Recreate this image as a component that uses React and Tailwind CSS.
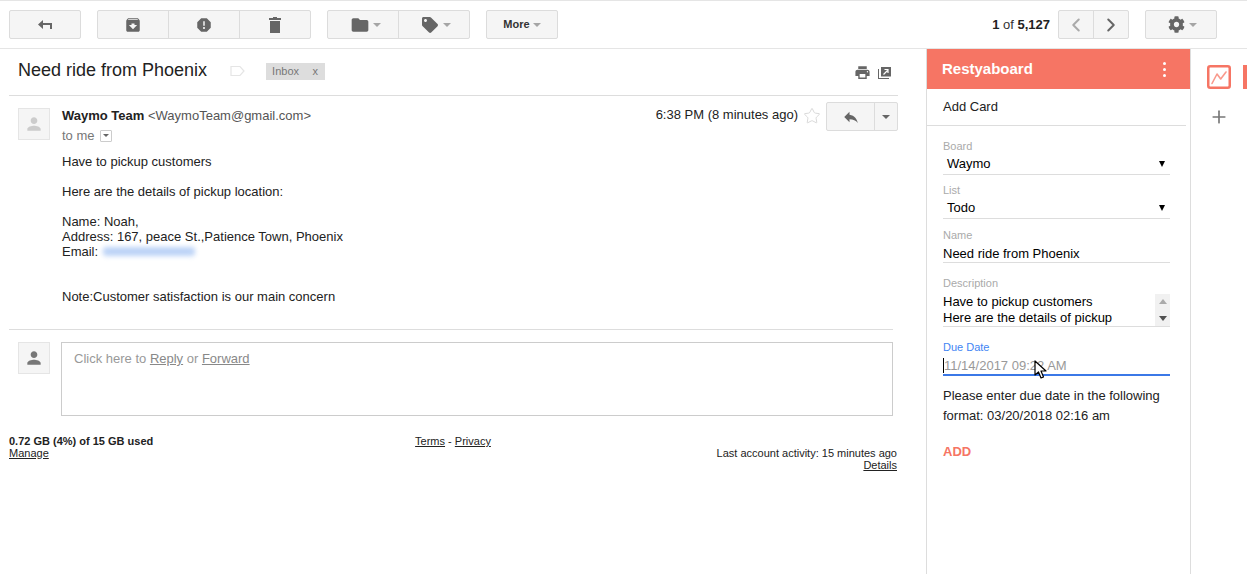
import React from 'react';
import { MdArchive, MdReport, MdFolder, MdReply, MdPrint, MdPerson } from 'react-icons/md';
import { FaCog, FaTag } from 'react-icons/fa';
import { ChevronLeft, ChevronRight, Plus, Star } from 'lucide-react';

const Caret = ({ className = 'border-t-[#a5a5a5]' }) => (
  <span className={`inline-block w-0 h-0 border-x-[4px] border-x-transparent border-t-[4px] ${className}`} />
);

const ToolBtn = ({ className = '', children }) => (
  <div className={`h-full flex items-center justify-center gap-[6px] border-r border-[#dcdcdc] last:border-r-0 text-[#666] ${className}`}>
    {children}
  </div>
);

const ToolGroup = ({ className = '', children }) => (
  <div className={`flex h-[29px] border border-[#dcdcdc] rounded-[2px] bg-[#f5f5f5] ${className}`}>{children}</div>
);

const Trash = () => (
  <svg width="12" height="16" viewBox="0 0 12 16" fill="#666">
    <path d="M4 0h4v1h4v2H0V1h4zM1 4h10v12H1z" />
  </svg>
);

const Popout = () => (
  <svg width="13" height="12" viewBox="0 0 13 12" fill="none">
    <path d="M0 2h1v9h10v1H0z" fill="#666" />
    <path d="M3 0h10v9.5H3z" fill="#666" />
    <path d="M5.5 7.5l4-4M6.5 2.5h3.5v3.5" stroke="#fff" strokeWidth="1.2" />
  </svg>
);

const Avatar = ({ iconClass }) => (
  <div className="w-[32px] h-[32px] shrink-0 bg-[#f5f5f5] border border-[#e5e5e5] flex items-center justify-center">
    <MdPerson size={20} className={iconClass} />
  </div>
);

const Label = ({ className = 'text-[#aaa]', children }) => (
  <div className={`text-[11px] leading-[13px] ${className}`}>{children}</div>
);

const SelectField = ({ label, value, className = '' }) => (
  <div className={className}>
    <Label>{label}</Label>
    <div className="mt-[1px] h-[19px] flex items-center justify-between pl-[4px] pr-[5px] border-b border-[#ddd] box-content pb-[1px] text-[13px] text-black">
      <span>{value}</span>
      <span className="inline-block w-0 h-0 border-x-[3.5px] border-x-transparent border-t-[6px] border-t-black" />
    </div>
  </div>
);

const Cursor = () => (
  <svg width="14" height="20" viewBox="0 0 14 20" className="absolute left-[91px] top-[2px]">
    <path d="M1 1v14l3.5-3 2.5 6 2.5-1-2.5-6H12z" fill="#fff" stroke="#000" strokeWidth="1.2" strokeLinejoin="round" />
  </svg>
);

const App = () => {
  return (
    <div className="w-[1247px] h-[574px] overflow-hidden bg-white flex flex-col font-['Liberation_Sans',Arial,sans-serif] text-[13px] text-[#222]">
      {/* top toolbar */}
      <div className="h-[49px] shrink-0 border-y border-[#e5e5e5] flex items-center pl-[9px] pr-[30px]">
        <ToolGroup className="w-[72px]">
          <ToolBtn className="flex-1">
            <svg width="14" height="9" viewBox="0 0 14 9" fill="#666"><path d="M5 0v3h9v6h-2V5H5v4L0 4.5z" /></svg>
          </ToolBtn>
        </ToolGroup>
        <ToolGroup className="w-[214px] ml-[16px]">
          <ToolBtn className="flex-1"><MdArchive size={18} /></ToolBtn>
          <ToolBtn className="flex-1"><MdReport size={18} /></ToolBtn>
          <ToolBtn className="flex-1"><Trash /></ToolBtn>
        </ToolGroup>
        <ToolGroup className="w-[143px] ml-[16px]">
          <ToolBtn className="flex-1 !gap-[3px] pl-[4px]"><MdFolder size={20} /><Caret /></ToolBtn>
          <ToolBtn className="flex-1 !gap-[5px] pl-[4px]"><FaTag size={16} /><Caret /></ToolBtn>
        </ToolGroup>
        <ToolGroup className="w-[72px] ml-[16px]">
          <ToolBtn className="flex-1 !gap-[3px] font-bold text-[11px] !text-[#333]">More<Caret /></ToolBtn>
        </ToolGroup>
        <div className="ml-auto text-[13px] text-[#333]">
          <b className="text-[#222]">1</b> of <b className="text-[#222]">5,127</b>
        </div>
        <ToolGroup className="w-[71px] ml-[8px]">
          <ToolBtn className="flex-1"><ChevronLeft size={22} strokeWidth={2.2} className="text-[#aaa]" /></ToolBtn>
          <ToolBtn className="flex-1"><ChevronRight size={22} strokeWidth={2.2} className="text-[#666]" /></ToolBtn>
        </ToolGroup>
        <ToolGroup className="w-[72px] ml-[16px]">
          <ToolBtn className="flex-1 !gap-[4px] pl-[2px]"><FaCog size={17} /><Caret /></ToolBtn>
        </ToolGroup>
      </div>

      <div className="flex flex-1 min-h-0">
        {/* mail column */}
        <div className="w-[926px] shrink-0 pl-[9px] pr-[28px]">
          <div className="h-[47px] border-b border-[#ddd] flex items-center pl-[9px]">
            <h1 className="text-[18px] text-[#222] font-normal mt-[-3px]">Need ride from Phoenix</h1>
            <svg width="15" height="12" viewBox="0 0 15 12" fill="none" className="ml-[23px] mt-[-3px]">
              <path d="M1 1.5h9l4 4.5-4 4.5H1z" stroke="#e5e5e5" strokeWidth="1.2" />
            </svg>
            <div className="ml-[21px] mt-[-2px] w-[59px] h-[17px] bg-[#ddd] flex items-center justify-between pl-[6px] pr-[7px] pt-[1px] text-[11px] text-[#777]">
              <span>Inbox</span>
              <span>x</span>
            </div>
            <div className="ml-auto flex items-center gap-[7px] pr-[7px] mt-[1px]">
              <MdPrint size={17} className="text-[#666]" />
              <Popout />
            </div>
          </div>

          <div className="flex pt-[12px] pl-[9px]">
            <Avatar iconClass="text-[#ccc]" />
            <div className="ml-[12px] flex-1 relative">
              <div className="leading-[15px]">
                <b className="text-[#222]">Waymo Team</b> <span className="text-[#555]">&lt;WaymoTeam@gmail.com&gt;</span>
              </div>
              <div className="flex items-center mt-[5px] leading-[15px] text-[#777]">
                to me
                <span className="ml-[5px] w-[12px] h-[12px] border border-[#ccc] rounded-[1px] flex items-center justify-center"><Caret className="border-t-[#666] !border-x-[3px] !border-t-[3px]" /></span>
              </div>
              <div className="absolute right-0 top-[-6px] flex items-center">
                <span className="text-[#222] mr-[5px] mb-[3px]">6:38 PM (8 minutes ago)</span>
                <Star size={18} strokeWidth={1} className="text-[#ccc] mr-[5px] mb-[1px]" />
                <ToolGroup className="w-[72px]">
                  <ToolBtn className="flex-1"><MdReply size={18} /></ToolBtn>
                  <ToolBtn className="w-[22px]"><Caret className="border-t-[#666]" /></ToolBtn>
                </ToolGroup>
              </div>
              <div className="mt-[11px] leading-[15px] text-[#222]">
                <p>Have to pickup customers</p>
                <p className="mt-[15px]">Here are the details of pickup location:</p>
                <p className="mt-[15px]">Name: Noah,</p>
                <p>Address: 167, peace St.,Patience Town, Phoenix</p>
                <p className="flex items-center">Email:&nbsp;<span className="inline-block w-[92px] h-[9px] ml-[1px] rounded-[3px] bg-[#bcd3f7] blur-[2.5px]" /></p>
                <p className="mt-[30px]">Note:Customer satisfaction is our main concern</p>
              </div>
            </div>
          </div>

          <div className="mt-[25px] mr-[5px] border-t border-[#ddd] pt-[12px] pl-[9px] flex">
            <Avatar iconClass="text-[#777]" />
            <div className="ml-[11px] flex-1 h-[74px] border border-[#ccc] pl-[12px] pt-[8px] text-[#999] leading-[15px]">
              Click here to <span className="underline text-[#888]">Reply</span> or <span className="underline text-[#888]">Forward</span>
            </div>
          </div>

          <div className="mt-[19px] grid grid-cols-3 text-[11px] leading-[12px] text-[#222] mr-[1px]">
            <div>
              <b>0.72 GB (4%) of 15 GB used</b>
              <div className="underline">Manage</div>
            </div>
            <div className="text-center">
              <span className="underline">Terms</span> - <span className="underline">Privacy</span>
            </div>
            <div className="text-right pt-[12px]">
              <div>Last account activity: 15 minutes ago</div>
              <div className="underline">Details</div>
            </div>
          </div>
        </div>

        {/* Restyaboard panel */}
        <div className="w-[264px] shrink-0 border-l border-[#ddd]">
          <div className="h-[40px] bg-[#f67564] flex items-center justify-between pl-[15px] pr-[24px] text-white">
            <span className="font-bold text-[15px]">Restyaboard</span>
            <span className="flex flex-col gap-[3px]">
              <span className="w-[3px] h-[3px] rounded-full bg-white" />
              <span className="w-[3px] h-[3px] rounded-full bg-white" />
              <span className="w-[3px] h-[3px] rounded-full bg-white" />
            </span>
          </div>
          <div className="h-[37px] mr-[4px] border-b border-[#ddd] pl-[16px] pt-[10px] leading-[15px] text-[#222]">Add Card</div>
          <div className="pl-[16px] pr-[20px] pt-[14px] text-[#222]">
            <SelectField label="Board" value="Waymo" />
            <SelectField label="List" value="Todo" className="mt-[9px]" />
            <div className="mt-[10px]">
              <Label>Name</Label>
              <div className="mt-[4px] h-[17px] leading-[15px] border-b border-[#ddd] text-black">Need ride from Phoenix</div>
            </div>
            <div className="mt-[14px]">
              <Label>Description</Label>
              <div className="mt-[4px] h-[33px] flex border-b border-[#ddd] text-black leading-[16px]">
                <div className="flex-1">Have to pickup customers<br />Here are the details of pickup</div>
                <div className="w-[15px] bg-[#f1f1f1] flex flex-col justify-between items-center py-[5px]">
                  <span className="w-0 h-0 border-x-[4px] border-x-transparent border-b-[5px] border-b-[#aaa]" />
                  <span className="w-0 h-0 border-x-[4px] border-x-transparent border-t-[5px] border-t-[#505050]" />
                </div>
              </div>
            </div>
            <div className="mt-[14px]">
              <Label className="text-[#4285f4]">Due Date</Label>
              <div className="relative mt-[4px] h-[16px] border-b-2 border-[#3b78e7] box-content leading-[15px] text-[#999]">
                <span className="absolute left-0 top-0 w-[1px] h-[15px] bg-black" />
                <span className="pl-[1px]">11/14/2017 09:22 AM</span>
                <Cursor />
              </div>
            </div>
            <p className="mt-[10px] leading-[20px] text-[#222]">Please enter due date in the following format: 03/20/2018 02:16 am</p>
            <div className="mt-[16px] font-bold text-[#f67564]">ADD</div>
          </div>
        </div>

        {/* right rail */}
        <div className="flex-1 border-l border-[#ddd] relative">
          <div className="flex flex-col items-center w-[56px] pt-[16px]">
            <svg width="24" height="24" viewBox="0 0 24 24" fill="none">
              <rect x="1.25" y="1.25" width="21.5" height="21.5" rx="2" stroke="#f67564" strokeWidth="2.5" />
              <path d="M5 18.5L10 9l3.7 5L19 7" stroke="#f9998c" strokeWidth="1.6" strokeLinecap="round" strokeLinejoin="round" />
            </svg>
            <Plus size={20} strokeWidth={2} className="text-[#777] mt-[18px]" />
          </div>
          <div className="absolute right-0 top-[16px] w-[4px] h-[24px] bg-[#f67564]" />
        </div>
      </div>
    </div>
  );
};

export default App;
